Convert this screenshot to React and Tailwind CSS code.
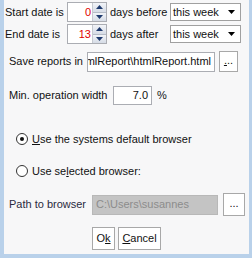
import React from "react";

const Spin = ({ value }) => (
  <div className="flex w-[40px] h-[20px] border border-[#abadb3] bg-white">
    <div className="flex-1 flex items-center justify-end pr-[1px] text-[#e00000]">{value}</div>
    <div className="w-[14px] flex flex-col border-l border-[#c5c9d0]">
      <div className="flex-1 flex items-center justify-center bg-gradient-to-b from-[#f2f4f8] to-[#d6dce6] border-b border-[#b5bcc7]">
        <svg width="7" height="4" viewBox="0 0 7 4"><path d="M0 4 L3.5 0 L7 4 Z" fill="#1e3a6e" /></svg>
      </div>
      <div className="flex-1 flex items-center justify-center bg-gradient-to-b from-[#f2f4f8] to-[#d6dce6]">
        <svg width="7" height="4" viewBox="0 0 7 4"><path d="M0 0 L3.5 4 L7 0 Z" fill="#1e3a6e" /></svg>
      </div>
    </div>
  </div>
);

const Select = ({ label }) => (
  <div className="flex items-center w-[71px] h-[18px] border border-[#a0a0a0] bg-white pl-[2px] pr-[5px]">
    <span className="flex-1 leading-none">{label}</span>
    <svg width="7" height="4" viewBox="0 0 7 4"><path d="M0 0 L3.5 4 L7 0 Z" fill="#000" /></svg>
  </div>
);

const Radio = ({ checked }) => (
  <div className="w-[12px] h-[12px] rounded-full border border-[#333] bg-white flex items-center justify-center">
    {checked && <div className="w-[4px] h-[4px] rounded-full bg-[#111]" />}
  </div>
);

const Btn = ({ children, className }) => (
  <div className={"flex items-center justify-center border border-[#a8a8a8] bg-white " + className}>
    {children}
  </div>
);

export default function App() {
  return (
    <div
      className="w-[252px] h-[258px] bg-[#f7f7f8] border-l-4 border-r-[3px] border-b-4 border-[#b9d1ea] text-[11px] text-[#111] flex flex-col"
      style={{ fontFamily: '"Liberation Sans", Arial, sans-serif' }}
    >
      <div className="flex items-center h-[20px] mt-[2px]">
        <span className="w-[63px] pl-[1px]">Start date is</span>
        <Spin value="0" />
        <span className="w-[63px] pl-[3px]">days before</span>
        <Select label="this week" />
      </div>

      <div className="flex items-center h-[20px] mt-[2px]">
        <span className="w-[63px] pl-[1px]">End date is</span>
        <Spin value="13" />
        <span className="w-[63px] pl-[3px]">days after</span>
        <Select label="this week" />
      </div>

      <div className="flex items-center h-[21px] mt-[7px] pl-[5px]">
        <span className="w-[78px]">Save reports in</span>
        <div className="w-[128px] h-[20px] border border-[#abadb3] bg-white flex items-center justify-end overflow-hidden whitespace-nowrap pr-[3px]">
          htmlReport\htmlReport.html
        </div>
        <Btn className="w-[19px] h-[21px] ml-[4px]">
          <span className="leading-none pb-[3px]"><span className="underline">.</span>..</span>
        </Btn>
      </div>

      <div className="flex items-center h-[19px] mt-[14px] pl-[5px]">
        <span className="w-[104px]">Min. operation width</span>
        <div className="w-[39px] h-[19px] border border-[#abadb3] bg-white flex items-center justify-end pr-[3px]">
          7.0
        </div>
        <span className="ml-[5px]">%</span>
      </div>

      <div className="flex items-center h-[14px] mt-[27px] pl-[12px]">
        <Radio checked />
        <span className="ml-[4px]"><span className="underline">U</span>se the systems default browser</span>
      </div>

      <div className="flex items-center h-[14px] mt-[18px] pl-[12px]">
        <Radio />
        <span className="ml-[4px]">Use se<span className="underline">l</span>ected browser:</span>
      </div>

      <div className="flex items-center h-[23px] mt-[15px] pl-[5px]">
        <span className="w-[83px] text-[#2a2a40]">Path to browser</span>
        <div className="w-[126px] h-[20px] bg-[#c4c4c4] border border-[#b8b8b8] flex items-center pl-[3px] text-[#8c8c8c] overflow-hidden whitespace-nowrap">
          C:\Users\susannes
        </div>
        <Btn className="w-[22px] h-[23px] ml-[5px]">
          <span className="leading-none pb-[3px]">...</span>
        </Btn>
      </div>

      <div className="flex items-center h-[23px] mt-[11px] pl-[88px] gap-[3px]">
        <Btn className="w-[23px] h-[23px]">
          <span>O<span className="underline">k</span></span>
        </Btn>
        <Btn className="w-[43px] h-[23px]">
          <span><span className="underline">C</span>ancel</span>
        </Btn>
      </div>
    </div>
  );
}
